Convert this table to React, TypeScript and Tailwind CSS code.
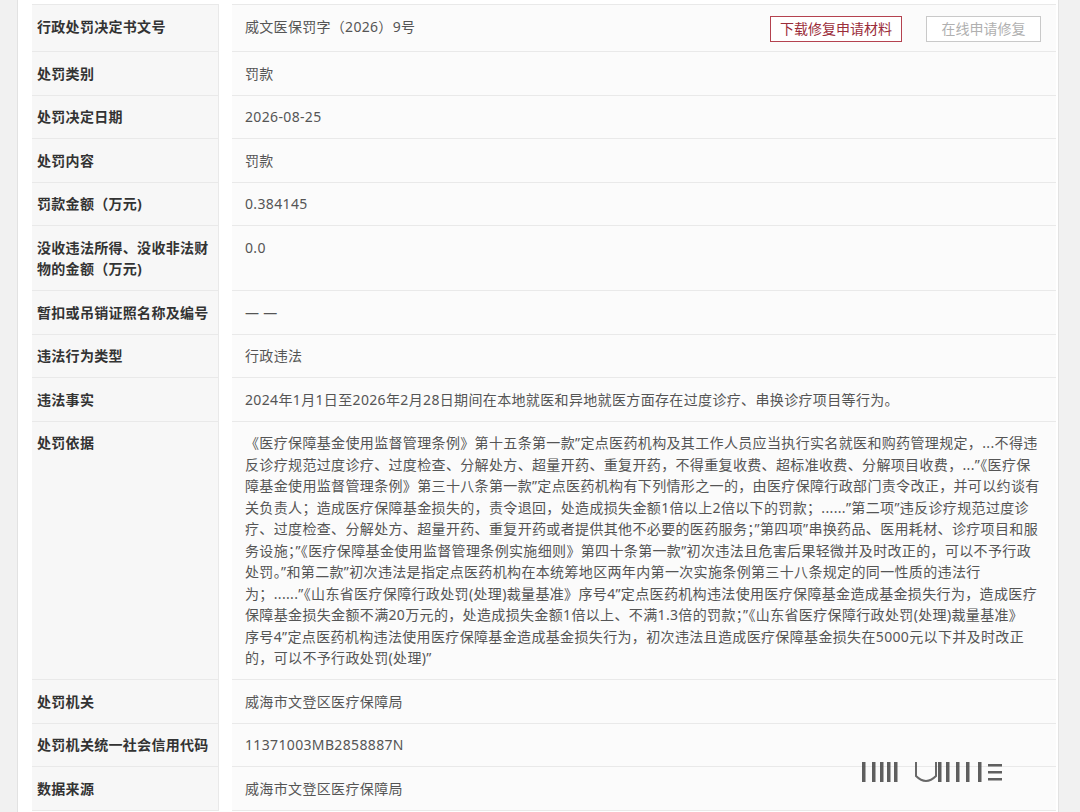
import React from 'react';

const basis = [
  '《医疗保障基金使用监督管理条例》第十五条第一款”定点医药机构及其工作人员应当执行实名就医和购药管理规定，...不得违',
  '反诊疗规范过度诊疗、过度检查、分解处方、超量开药、重复开药，不得重复收费、超标准收费、分解项目收费，...”《医疗保',
  '障基金使用监督管理条例》第三十八条第一款”定点医药机构有下列情形之一的，由医疗保障行政部门责令改正，并可以约谈有',
  '关负责人；造成医疗保障基金损失的，责令退回，处造成损失金额1倍以上2倍以下的罚款；......”第二项”违反诊疗规范过度诊',
  '疗、过度检查、分解处方、超量开药、重复开药或者提供其他不必要的医药服务；”第四项”串换药品、医用耗材、诊疗项目和服',
  '务设施；”《医疗保障基金使用监督管理条例实施细则》第四十条第一款”初次违法且危害后果轻微并及时改正的，可以不予行政',
  '处罚。”和第二款”初次违法是指定点医药机构在本统筹地区两年内第一次实施条例第三十八条规定的同一性质的违法行',
  '为；......”《山东省医疗保障行政处罚(处理)裁量基准》序号4”定点医药机构违法使用医疗保障基金造成基金损失行为，造成医疗',
  '保障基金损失金额不满20万元的，处造成损失金额1倍以上、不满1.3倍的罚款；”《山东省医疗保障行政处罚(处理)裁量基准》',
  '序号4”定点医药机构违法使用医疗保障基金造成基金损失行为，初次违法且造成医疗保障基金损失在5000元以下并及时改正',
  '的，可以不予行政处罚(处理)”',
];

type Row = { label: string[]; value: string[] };

const rows: Row[] = [
  { label: ['处罚类别'], value: ['罚款'] },
  { label: ['处罚决定日期'], value: ['2026-08-25'] },
  { label: ['处罚内容'], value: ['罚款'] },
  { label: ['罚款金额（万元)'], value: ['0.384145'] },
  { label: ['没收违法所得、没收非法财', '物的金额（万元)'], value: ['0.0'] },
  { label: ['暂扣或吊销证照名称及编号'], value: ['— —'] },
  { label: ['违法行为类型'], value: ['行政违法'] },
  { label: ['违法事实'], value: ['2024年1月1日至2026年2月28日期间在本地就医和异地就医方面存在过度诊疗、串换诊疗项目等行为。'] },
  { label: ['处罚依据'], value: basis },
  { label: ['处罚机关'], value: ['威海市文登区医疗保障局'] },
  { label: ['处罚机关统一社会信用代码'], value: ['11371003MB2858887N'] },
  { label: ['数据来源'], value: ['威海市文登区医疗保障局'] },
];

function Lines({ lines }: { lines: string[] }) {
  return (
    <>
      {lines.map((l, i) => (
        <div key={i} className="whitespace-nowrap">
          {l}
        </div>
      ))}
    </>
  );
}

export default function App() {
  return (
    <div
      className="relative min-h-screen bg-[#f1f1f1] pl-[17px] pr-[21px] text-[14px] leading-[21.5px]"
      style={{ fontFamily: '"Noto Sans", "Noto Sans CJK SC", sans-serif' }}
    >
      <div className="min-h-screen border-x border-[#e2e2e2] bg-white pl-[14px] pr-[2px] pt-[4px]">
        {/* first row with buttons */}
        <div className="flex">
          <div className="h-[48px] w-[187px] border-y border-r border-[#e9e9e9] bg-[#f7f7f7] pl-[5px] pt-[11px] font-bold tracking-[0.3px] text-[#333]">
            行政处罚决定书文号
          </div>
          <div className="ml-[13px] flex h-[48px] flex-1 items-start justify-between border-y border-[#e9e9e9] bg-[#fbfbfb] pl-[13px] pr-[15px] pt-[11px] tracking-[0.3px] text-[#555]">
            <span>威文医保罚字（2026）9号</span>
            <div className="flex gap-[24px] tracking-normal">
              <button className="h-[26px] w-[132px] border border-[#b4424f] bg-white text-[14px] leading-[24px] text-[#9b2d3a]">
                下载修复申请材料
              </button>
              <button className="h-[26px] w-[115px] border border-[#c9c9c9] bg-white text-[14px] leading-[24px] text-[#b0b0b0]">
                在线申请修复
              </button>
            </div>
          </div>
        </div>

        {rows.map((r, i) => (
          <div key={i} className="flex">
            <div className="w-[187px] border-b border-r border-[#e9e9e9] bg-[#f7f7f7] pb-[10.5px] pl-[5px] pt-[10.5px] font-bold tracking-[0.3px] text-[#333]">
              <Lines lines={r.label} />
            </div>
            <div className="ml-[13px] flex-1 border-b border-[#e9e9e9] bg-[#fbfbfb] pb-[10.5px] pl-[13px] pr-[15px] pt-[10.5px] tracking-[0.35px] text-[#555]">
              <Lines lines={r.value} />
            </div>
          </div>
        ))}
      </div>

      {/* blurred watermark */}
      <svg className="absolute left-[860px] top-[755px] blur-[0.6px]" width="146" height="32" viewBox="0 0 146 32">
        <g fill="#444" opacity="0.85">
          <rect x="2" y="7" width="3.5" height="20" />
          <rect x="12" y="7" width="3.5" height="20" />
          <rect x="20" y="7" width="3.5" height="20" />
          <rect x="27" y="7" width="3.5" height="20" />
          <rect x="34" y="7" width="3.5" height="20" />
          <rect x="78" y="7" width="3.5" height="20" />
          <rect x="86" y="7" width="3.5" height="20" />
          <rect x="96" y="7" width="3.5" height="20" />
          <rect x="106" y="7" width="3.5" height="20" />
          <rect x="118" y="7" width="3.5" height="20" />
          <rect x="128" y="9" width="14" height="2.5" />
          <rect x="128" y="16" width="14" height="2.5" />
          <rect x="128" y="23" width="14" height="2.5" />
        </g>
        <path d="M56 7 V21 Q66 31 76 21 V7" fill="none" stroke="#444" strokeWidth="2" opacity="0.8" />
      </svg>
    </div>
  );
}
